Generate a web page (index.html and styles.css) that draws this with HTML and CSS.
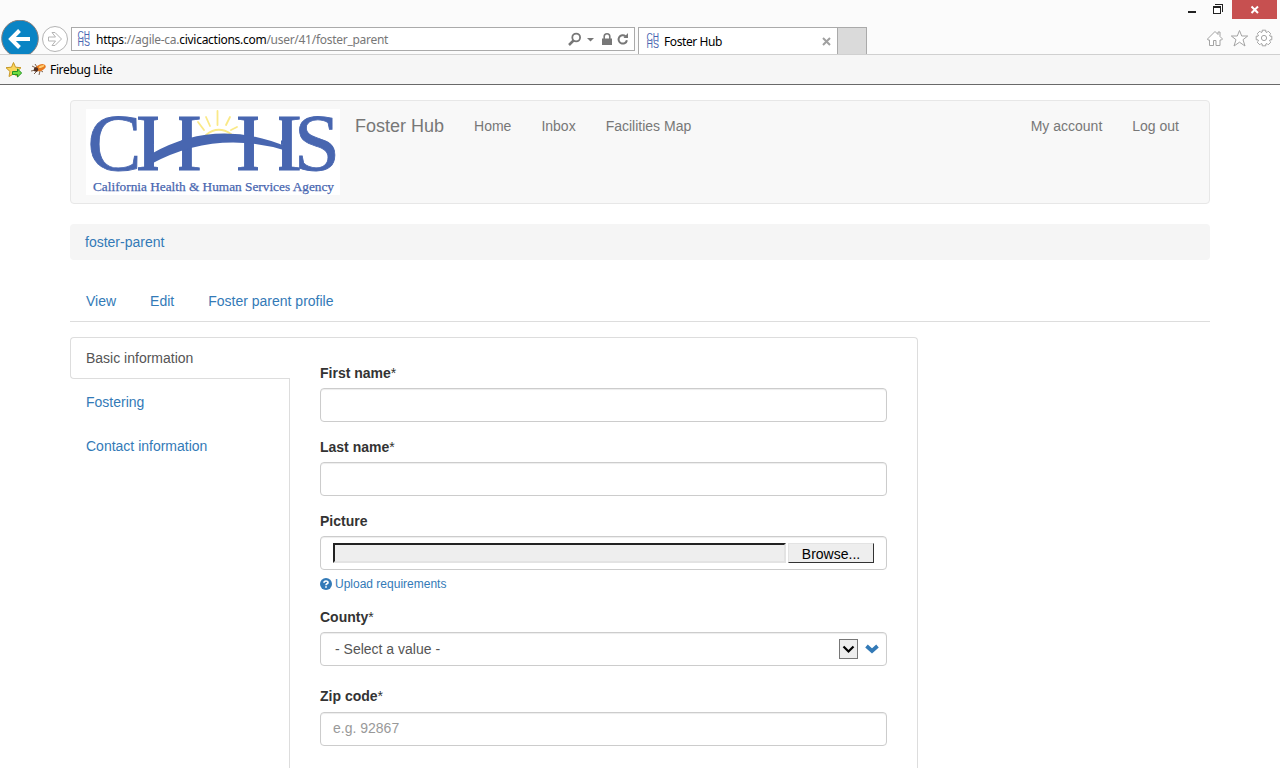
FILE: index.html
```html
<!DOCTYPE html>
<html lang="en">
<head>
<meta charset="utf-8">
<title>Foster Hub</title>
<link rel="stylesheet" href="styles.css">
</head>
<body>
<header class="browser">
  <div class="window-bar">
    <svg class="window-icons" width="45" height="20" viewBox="1187 0 45 20" shape-rendering="crispEdges"><path d="M1188 12h8" stroke="#222" stroke-width="2"/><path d="M1215 4.500h7.500V12" fill="none" stroke="#222"/><path d="M1213.500 7h7v6.500h-7z" fill="#fff" stroke="#222"/><path d="M1213 7h8" stroke="#222" stroke-width="2"/></svg>
    <div class="close"><svg width="10" height="10" viewBox="0 0 10 10"><path d="M1.500 1.500l6.500 6.500M8 1.500L1.500 8" stroke="#fff" stroke-width="2"/></svg></div>
  </div>
  <div class="toolbar">
    <svg class="back" width="40" height="34" viewBox="0 20 40 34"><circle cx="20" cy="38.500" r="18.300" fill="#0a84c4" stroke="#8a7f7c"/><path d="M30 39H12M19.500 30.500L11 39l8.500 8.500" fill="none" stroke="#fff" stroke-width="4"/></svg>
    <svg class="forward" width="28" height="34" viewBox="41 20 28 34"><circle cx="55" cy="39" r="12.500" fill="#fff" stroke="#b4b4b4"/><path d="M48.500 37h7l-3.500-4.500h3l6.500 6.500-6.500 6.500h-3l3.500-4.500h-7z" fill="#fff" stroke="#b4b4b4"/></svg>
    <div class="address">
      <svg class="favicon" width="14" height="16" viewBox="0 0 14 16"><text x="0.500" y="7.500" textLength="12.500" lengthAdjust="spacingAndGlyphs">CH</text><text x="0.500" y="15" textLength="12.500" lengthAdjust="spacingAndGlyphs">HS</text></svg>
      <span class="url"><b>https</b>://agile-ca.<b>civicactions.com</b>/user/41/foster_parent</span>
      <svg class="address-tools" width="64" height="16" viewBox="567 31 64 16" fill="none" stroke="#777"><circle cx="576.200" cy="37.500" r="3.900" stroke-width="1.800"/><path d="M573.500 40.500l-4.500 4.500" stroke-width="2.500"/><path d="M587 38h7l-3.500 3.500z" fill="#777" stroke="none"/><path d="M602 38.500h10V45h-10z" fill="#777" stroke="none"/><path d="M604.200 39v-2.500a2.800 2.800 0 0 1 5.600 0V39" stroke-width="1.600"/><path d="M625.500 36.200a4.200 4.200 0 1 0 1.400 4" stroke-width="2"/><path d="M623.500 38h4.500V33z" fill="#777" stroke="none"/></svg>
    </div>
    <div class="page-tab">
      <svg class="favicon" width="14" height="16" viewBox="0 0 14 16"><text x="0.500" y="7.500" textLength="12.500" lengthAdjust="spacingAndGlyphs">CH</text><text x="0.500" y="15" textLength="12.500" lengthAdjust="spacingAndGlyphs">HS</text></svg>
      <span class="tab-title">Foster Hub</span>
      <svg width="9" height="9" viewBox="0 0 9 9"><path d="M1 1l7 7M8 1L1 8" stroke="#a0a0a0" stroke-width="2"/></svg>
    </div>
    <div class="new-tab"></div>
    <svg class="browser-tools" width="68" height="20" viewBox="1206 28 68 20" fill="#fff" stroke="#a3a3a3"><path d="M1207.500 39l7.500-7.500 3 3v-2.500h2v4.500l2.500 2.500-1 1h-1.500v5.500h-4v-5h-2.500v5h-4V40h-1.500z"/><path d="M1239.500 30.500l2.200 5.500h6l-4.700 3.700 2 6.300-5.500-3.800-5.500 3.800 2-6.300-4.700-3.700h6z"/><g transform="translate(1264 38)"><path d="M-1.800-7.800H1.800V-6L3-5.500 4.200-6.800 6.800-4.200 5.500-3 6-1.800H7.800V1.800H6L5.500 3 6.800 4.200 4.200 6.800 3 5.500 1.800 6V7.800H-1.800V6L-3 5.500-4.200 6.800-6.800 4.200-5.500 3-6 1.800H-7.800V-1.800H-6L-5.500-3-6.800-4.200-4.200-6.800-3-5.500-1.800-6z"/><circle r="2.600"/></g></svg>
  </div>
  <div class="favorites">
    <svg width="17" height="17" viewBox="5 62 17 17"><path d="M13.500 63.500l2 4.700 5.500.5-4 3.800 1 5-4.500-2.500-4.500 2.500 1-5-4-3.800 5.500-.5z" fill="#fbd65c" stroke="#c69726"/><path d="M12.500 72.500h5v-2.500l4.200 4-4.200 4v-2.500h-5z" fill="#6fdc3f" stroke="#219326"/></svg>
    <svg class="bug" width="16" height="14" viewBox="31 63 16 14"><path d="M32 66l4 2M31 71l5-1M34 74l3-3M39 75l1-4M43 72l-3-2M35 64l2 3" stroke="#5c3a22" stroke-width=".8"/><ellipse cx="40.500" cy="67.700" rx="5.500" ry="3.200" transform="rotate(-22 40.500 67.700)" fill="#e87a20"/><ellipse cx="41.500" cy="66.500" rx="3" ry="1" transform="rotate(-22 41.500 66.500)" fill="#ffd071"/><circle cx="36" cy="69.500" r="2.200" fill="#4e2e22"/></svg>
    <span>Firebug Lite</span>
  </div>
</header>
<main class="container">
  <nav class="navbar">
    <svg class="logo" width="254" height="86" viewBox="0 0 254 86">
      <defs><clipPath id="stems"><path d="M52 0h20v14H52zM55 10h13v50H55zM52 56h20v12H52zM93 0h22v14H93zM95 10h15v50H95zM93 56h22v12H93zM152 0h20v14h-20zM155 10h13v50h-13zM152 56h20v12h-20zM193 0h22v14h-22zM195 10h15v50h-15zM193 56h22v12h-22z"/></clipPath></defs>
      <rect width="254" height="86" fill="#fff"/>
      <g fill="none" stroke="#fae987" stroke-width="1.800" stroke-linecap="round"><path d="M120 26q12-10 25-1M112 13l6 8M120 8l4 9M131.500 2v14M144 8l-4 8M151 18l-6 3"/></g>
      <g class="logo-letters"><text x="1.500" y="61" textLength="54" lengthAdjust="spacingAndGlyphs">C</text>
      <g clip-path="url(#stems)"><text x="48" y="61" textLength="68" lengthAdjust="spacingAndGlyphs">H</text><text x="148" y="61" textLength="68" lengthAdjust="spacingAndGlyphs">H</text></g>
      <text x="208" y="61" textLength="46" lengthAdjust="spacingAndGlyphs">S</text></g>
      <path d="M65 45Q130 8 201 38v4Q130 20 65 55z" fill="#4866b0"/>
      <text class="logo-name" x="7" y="82" textLength="241" lengthAdjust="spacingAndGlyphs">California Health &amp; Human Services Agency</text>
    </svg>
    <a class="brand">Foster Hub</a>
    <a>Home</a><a>Inbox</a><a>Facilities Map</a>
    <a class="account">My account</a><a>Log out</a>
  </nav>
  <div class="breadcrumb"><a>foster-parent</a></div>
  <nav class="tabs"><a>View</a><a>Edit</a><a>Foster parent profile</a></nav>
  <div class="profile">
    <nav class="sections"><a class="active">Basic information</a><a>Fostering</a><a>Contact information</a></nav>
    <form class="panel">
      <div class="field"><label>First name<span>*</span></label><input class="control"></div>
      <div class="field"><label>Last name<span>*</span></label><input class="control"></div>
      <div class="field picture"><label>Picture</label>
        <div class="control file"><span class="file-name"></span><span class="browse">Browse...</span></div>
        <a class="help"><svg width="12" height="12" viewBox="0 0 12 12"><circle cx="6" cy="6" r="6" fill="#337ab7"/><path d="M4 4.700C4 2.500 8 2.500 8 4.500 8 6 6 5.700 6 7.200M6 8.200v1.600" fill="none" stroke="#fff" stroke-width="1.700"/></svg>Upload requirements</a>
      </div>
      <div class="field county"><label>County<span>*</span></label>
        <div class="control select"><span class="value">- Select a value -</span><span class="dropdown"><svg width="13" height="9" viewBox="0 0 13 9"><path d="M1.500 1.500l5 5 5-5" fill="none" stroke="#000" stroke-width="2.200"/></svg></span><svg width="14" height="10" viewBox="0 0 14 10"><path d="M1.500 2L7 7l5.500-5" fill="none" stroke="#337ab7" stroke-width="3.800"/></svg></div>
      </div>
      <div class="field zip"><label>Zip code<span>*</span></label><input class="control" placeholder="e.g. 92867"></div>
    </form>
  </div>
</main>
</body>
</html>
```
FILE: styles.css
```css
* { box-sizing: border-box; }
body { margin: 0; height: 768px; overflow: hidden; background: #fff; color: #333; font: 14px/20px "Liberation Sans", Arial, sans-serif; }
svg { display: block; flex: none; }
.browser { height: 85px; background: #fbfbfb; border-bottom: 1px solid #696969; font: 12px/16px "Noto Sans", sans-serif; color: #000; }
.window-bar { height: 20px; display: flex; justify-content: flex-end; padding-right: 3px; }
.close { width: 45px; height: 19px; background: #c75050; display: flex; align-items: center; justify-content: center; }
.toolbar { height: 34px; display: flex; align-items: flex-start; }
.back { margin-right: 1px; }
.address { width: 564px; height: 24px; margin: 7px 3px 0 2px; padding: 0 3px 0 5px; border: 1px solid #aaa; background: #fff; display: flex; align-items: center; }
.favicon { font: 10px "Liberation Sans", Arial, sans-serif; fill: #4a67b2; }
.url { margin-left: 5px; padding-top: 2px; color: #777; flex: 1; letter-spacing: -.28px; white-space: nowrap; }
.url b { color: #000; font-weight: 400; }
.page-tab { width: 200px; height: 27px; margin-top: 7px; padding: 0 6px 0 7px; border: 1px solid #aaa; border-bottom: 0; background: #fff; display: flex; align-items: center; }
.tab-title { flex: 1; margin-left: 4px; padding-top: 2px; letter-spacing: -.4px; }
.new-tab { width: 29px; height: 27px; margin-top: 7px; background: #dadada; border: 1px solid #aaa; border-width: 1px 1px 0 0; }
.browser-tools { margin: 8px 6px 0 auto; }
.favorites { height: 30px; padding: 0 5px; display: flex; align-items: center; background: #f6f6f6; border-top: 1px solid #d0d0d0; letter-spacing: -.35px; }
.bug { margin: 0 3px 0 9px; }
.container { width: 1140px; margin: 15px auto 0; }
.navbar { height: 104px; padding: 8px 15px; border: 1px solid #e7e7e7; border-radius: 4px; background: #f8f8f8; display: flex; }
.navbar a { color: #777; padding: 7px 15px; white-space: nowrap; }
.navbar .brand { font-size: 18px; }
.navbar .account { margin-left: auto; }
.logo-letters { font: 80px "Liberation Serif", serif; fill: #4866b0; stroke: #4866b0; stroke-width: .8px; }
.logo-name { font: 13px "Liberation Serif", serif; fill: #4866b0; stroke: #4866b0; stroke-width: .25px; }
.breadcrumb { height: 36px; margin-top: 20px; padding: 8px 15px; border-radius: 4px; background: #f5f5f5; }
.breadcrumb a, .tabs a, .sections a, .help { color: #337ab7; }
.tabs { height: 42px; margin-top: 20px; border-bottom: 1px solid #ddd; display: flex; gap: 2px; }
.tabs a { padding: 11px 16px; }
.profile { display: flex; margin-top: 15px; }
.sections { width: 220px; display: flex; flex-direction: column; gap: 2px; border-right: 1px solid #ddd; height: 440px; }
.sections a { height: 42px; padding: 11px 16px; }
.sections .active { color: #555; background: #fff; border: 1px solid #ddd; border-right: 0; border-radius: 4px 0 0 4px; padding: 10px 15px; margin-right: -1px; }
.panel { width: 628px; height: 440px; padding: 25px 30px 0; border: 1px solid #ddd; border-width: 1px 1px 0 0; border-radius: 0 4px 0 0; }
.field { margin-bottom: 15px; }
label { display: block; margin-bottom: 5px; font-weight: 700; }
label span { font-weight: 400; }
.control { display: flex; align-items: center; width: 567px; height: 34px; padding: 0 12px; border: 1px solid #ccc; border-radius: 4px; background: #fff; box-shadow: inset 0 1px 1px rgba(0,0,0,.075); font: 14px "Liberation Sans", Arial, sans-serif; color: #555; }
.control::placeholder { color: #999; opacity: 1; }
.file { gap: 2px; }
.file-name { flex: 1; height: 20px; background: #eee; border: 2px solid; border-color: #222 #e3e3e3 #e3e3e3 #222; }
.browse { width: 86px; height: 20px; background: #eee; border: 1px solid; border-color: #e3e3e3 #333 #333 #e3e3e3; color: #000; text-align: center; line-height: 21px; }
.help { display: flex; align-items: center; gap: 3px; height: 17px; margin-top: 5px; font-size: 12px; }
.picture { margin-bottom: 15px; }
.county { margin-bottom: 20px; }
.select { padding: 0 7px 0 14px; }
.value { flex: 1; }
.dropdown { width: 19px; height: 20px; margin-right: 7px; border: 1px solid #777; background: #eee; display: flex; align-items: center; justify-content: center; }
.zip label { margin-bottom: 6px; }
.zip .control { padding-bottom: 2px; }
```
